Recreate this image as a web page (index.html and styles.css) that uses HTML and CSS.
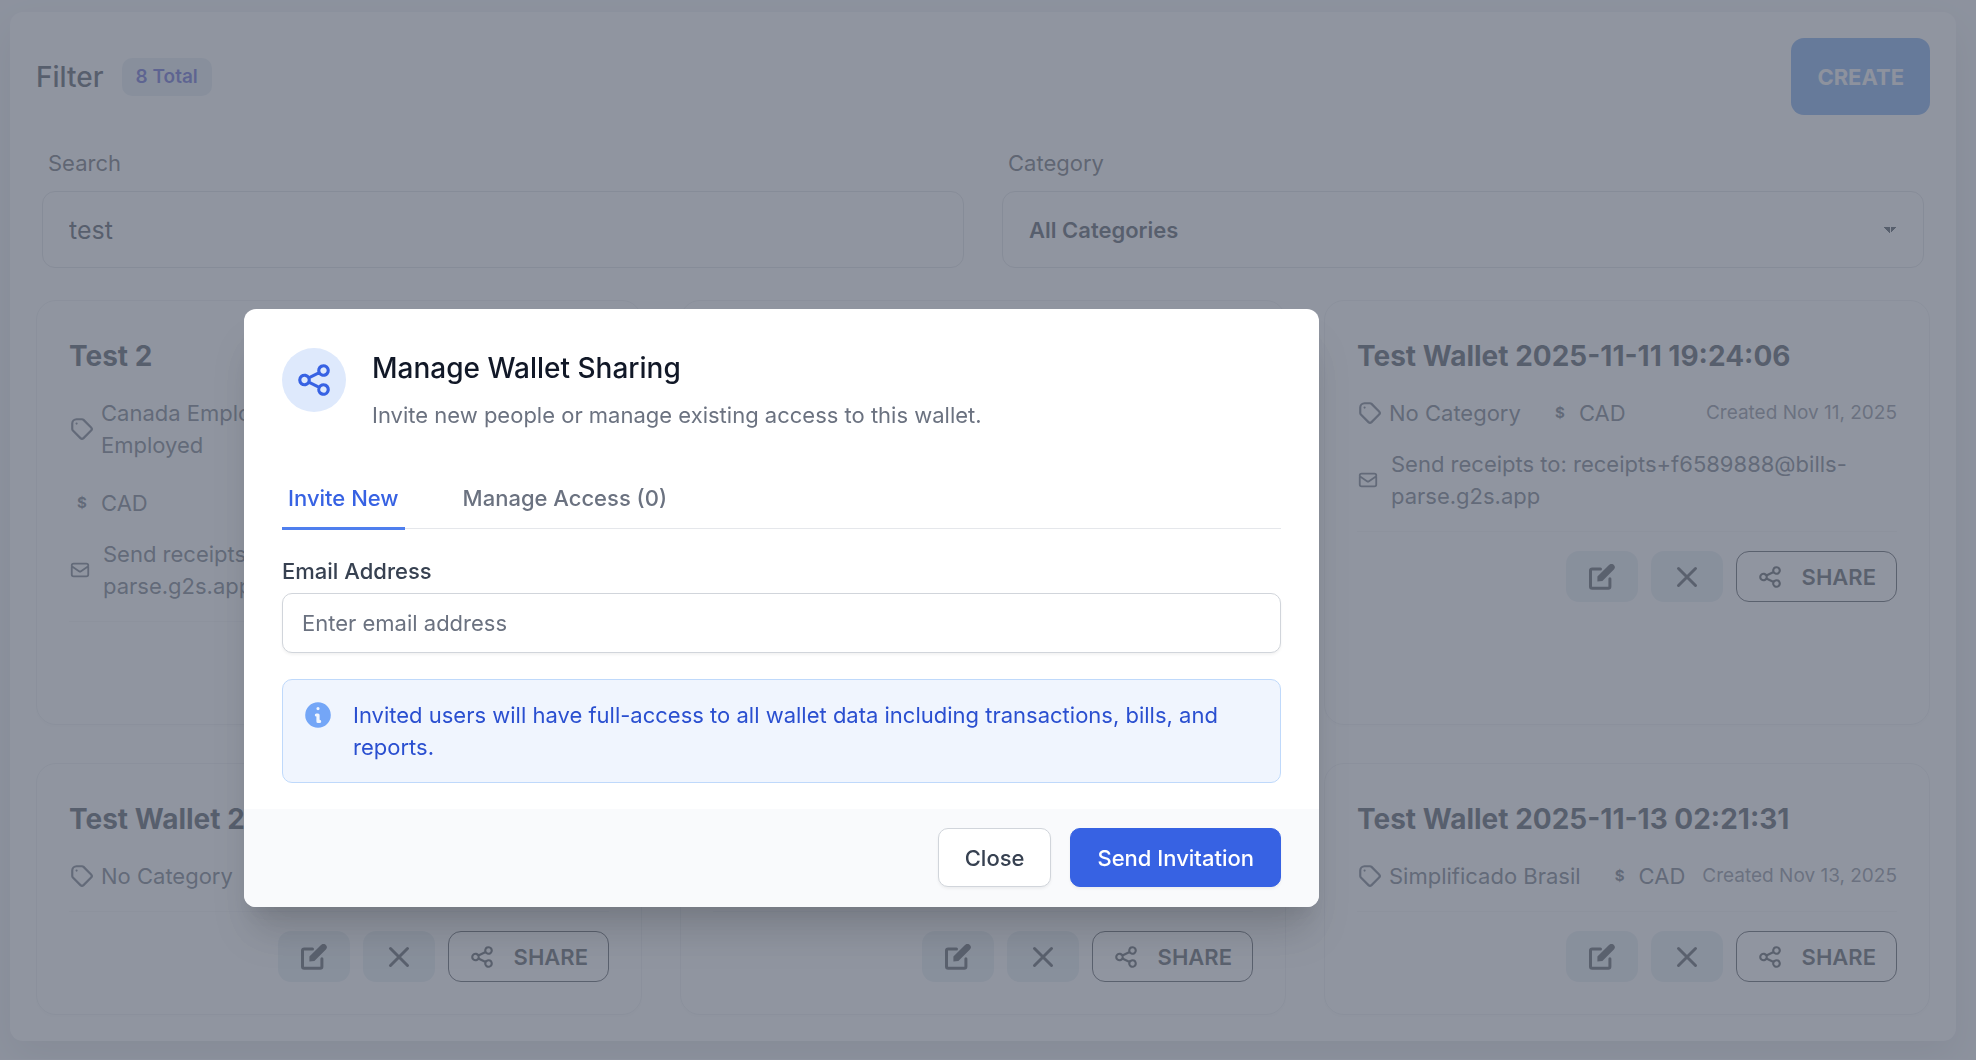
FILE: index.html
```html
<!DOCTYPE html>
<html lang="en">

<head>
    <meta charset="UTF-8">
    <meta name="viewport" content="width=device-width, initial-scale=1.0">
    <title>Wallets</title>
    <link rel="stylesheet" href="styles.css">
</head>

<body>
    <!-- shared icons -->
    <svg class="sprite" aria-hidden="true">
        <symbol id="icon-tag" viewBox="0 0 24 24">
            <path d="M7 7h.01M7 3h5c.512 0 1.024.195 1.414.586l7 7a2 2 0 010 2.828l-7 7a2 2 0 01-2.828 0l-7-7A1.994 1.994 0 013 12V7a4 4 0 014-4z" />
        </symbol>
        <symbol id="icon-mail" viewBox="0 0 24 24">
            <path d="M3 8l7.89 5.26a2 2 0 002.22 0L21 8M5 19h14a2 2 0 002-2V7a2 2 0 00-2-2H5a2 2 0 00-2 2v10a2 2 0 002 2z" />
        </symbol>
        <symbol id="icon-share" viewBox="0 0 24 24">
            <path d="M8.684 13.342C8.886 12.938 9 12.482 9 12c0-.482-.114-.938-.316-1.342m0 2.684a3 3 0 110-2.684m0 2.684l6.632 3.316m-6.632-6l6.632-3.316m0 0a3 3 0 105.367-2.684 3 3 0 00-5.367 2.684zm0 9.316a3 3 0 105.368 2.684 3 3 0 00-5.368-2.684z" />
        </symbol>
        <symbol id="icon-edit" viewBox="0 0 26 26">
            <path d="M11.5 4.9H3.2Q1.5 4.9 1.5 6.6V22.6Q1.5 24.3 3.2 24.3H19.2Q20.9 24.3 20.9 22.6V14.8" fill="none" stroke="currentColor" stroke-width="3" />
            <path d="M8.4 17.6V12.4L20 1.1a3.2 3.2 0 0 1 4.9 4.4L13.4 17z" fill="currentColor" stroke="none" />
        </symbol>
        <symbol id="icon-close" viewBox="0 0 26 26">
            <path d="M4.5 4.5l17 17M21.5 4.5l-17 17" stroke-width="3" />
        </symbol>
    </svg>

    <main class="panel">
        <header class="panel-header">
            <h1>Filter</h1>
            <span class="badge">8 Total</span>
            <button type="button" class="btn-create">CREATE</button>
        </header>

        <form class="filters">
            <div class="field">
                <label for="search">Search</label>
                <input type="text" id="search" value="test">
            </div>
            <div class="field">
                <label for="category">Category</label>
                <select id="category">
                    <option>All Categories</option>
                </select>
            </div>
        </form>

        <div class="cards">
            <article class="card">
                <h2>Test 2</h2>
                <div class="meta">
                    <div class="tags">
                        <span class="tag"><svg class="icon"><use href="#icon-tag" /></svg>Canada Employed &amp; Self Employed</span>
                        <span class="tag"><b class="currency">$</b>CAD</span>
                    </div>
                    <span class="date">Created Nov 10, 2025</span>
                </div>
                <p class="email"><svg class="icon icon-mail"><use href="#icon-mail" /></svg>Send receipts to: receipts+a1048213@bills-parse.g2s.app</p>
                <div class="actions">
                    <button type="button" class="btn-icon" aria-label="Edit"><svg class="icon-lg"><use href="#icon-edit" /></svg></button>
                    <button type="button" class="btn-icon" aria-label="Delete"><svg class="icon-lg"><use href="#icon-close" /></svg></button>
                    <button type="button" class="btn-share"><svg class="icon-lg"><use href="#icon-share" /></svg>SHARE</button>
                </div>
            </article>

            <article class="card">
                <h2>Test Wallet 2025-11-10 18:02:44</h2>
                <div class="meta">
                    <div class="tags">
                        <span class="tag"><svg class="icon"><use href="#icon-tag" /></svg>No Category</span>
                        <span class="tag"><b class="currency">$</b>CAD</span>
                    </div>
                    <span class="date">Created Nov 10, 2025</span>
                </div>
                <div class="actions">
                    <button type="button" class="btn-icon" aria-label="Edit"><svg class="icon-lg"><use href="#icon-edit" /></svg></button>
                    <button type="button" class="btn-icon" aria-label="Delete"><svg class="icon-lg"><use href="#icon-close" /></svg></button>
                    <button type="button" class="btn-share"><svg class="icon-lg"><use href="#icon-share" /></svg>SHARE</button>
                </div>
            </article>

            <article class="card">
                <h2>Test Wallet 2025-11-11 19:24:06</h2>
                <div class="meta">
                    <div class="tags">
                        <span class="tag"><svg class="icon"><use href="#icon-tag" /></svg>No Category</span>
                        <span class="tag"><b class="currency">$</b>CAD</span>
                    </div>
                    <span class="date">Created Nov 11, 2025</span>
                </div>
                <p class="email"><svg class="icon icon-mail"><use href="#icon-mail" /></svg>Send receipts to: receipts+f6589888@bills-parse.g2s.app</p>
                <div class="actions">
                    <button type="button" class="btn-icon" aria-label="Edit"><svg class="icon-lg"><use href="#icon-edit" /></svg></button>
                    <button type="button" class="btn-icon" aria-label="Delete"><svg class="icon-lg"><use href="#icon-close" /></svg></button>
                    <button type="button" class="btn-share"><svg class="icon-lg"><use href="#icon-share" /></svg>SHARE</button>
                </div>
            </article>

            <article class="card">
                <h2>Test Wallet 2025-11-12 20:15:09</h2>
                <div class="meta">
                    <div class="tags">
                        <span class="tag"><svg class="icon"><use href="#icon-tag" /></svg>No Category</span>
                        <span class="tag"><b class="currency">$</b>CAD</span>
                    </div>
                    <span class="date">Created Nov 12, 2025</span>
                </div>
                <div class="actions">
                    <button type="button" class="btn-icon" aria-label="Edit"><svg class="icon-lg"><use href="#icon-edit" /></svg></button>
                    <button type="button" class="btn-icon" aria-label="Delete"><svg class="icon-lg"><use href="#icon-close" /></svg></button>
                    <button type="button" class="btn-share"><svg class="icon-lg"><use href="#icon-share" /></svg>SHARE</button>
                </div>
            </article>

            <article class="card">
                <h2>Test Wallet 2025-11-12 21:40:52</h2>
                <div class="meta">
                    <div class="tags">
                        <span class="tag"><svg class="icon"><use href="#icon-tag" /></svg>No Category</span>
                        <span class="tag"><b class="currency">$</b>CAD</span>
                    </div>
                    <span class="date">Created Nov 12, 2025</span>
                </div>
                <div class="actions">
                    <button type="button" class="btn-icon" aria-label="Edit"><svg class="icon-lg"><use href="#icon-edit" /></svg></button>
                    <button type="button" class="btn-icon" aria-label="Delete"><svg class="icon-lg"><use href="#icon-close" /></svg></button>
                    <button type="button" class="btn-share"><svg class="icon-lg"><use href="#icon-share" /></svg>SHARE</button>
                </div>
            </article>

            <article class="card">
                <h2>Test Wallet 2025-11-13 02:21:31</h2>
                <div class="meta">
                    <div class="tags">
                        <span class="tag"><svg class="icon"><use href="#icon-tag" /></svg>Simplificado Brasil</span>
                        <span class="tag"><b class="currency">$</b>CAD</span>
                    </div>
                    <span class="date">Created Nov 13, 2025</span>
                </div>
                <div class="actions">
                    <button type="button" class="btn-icon" aria-label="Edit"><svg class="icon-lg"><use href="#icon-edit" /></svg></button>
                    <button type="button" class="btn-icon" aria-label="Delete"><svg class="icon-lg"><use href="#icon-close" /></svg></button>
                    <button type="button" class="btn-share"><svg class="icon-lg"><use href="#icon-share" /></svg>SHARE</button>
                </div>
            </article>
        </div>
    </main>

    <div class="overlay">
        <div class="modal" role="dialog" aria-labelledby="modal-title">
            <div class="modal-body">
                <div class="modal-header">
                    <div class="modal-icon"><svg><use href="#icon-share" /></svg></div>
                    <div>
                        <h3 id="modal-title">Manage Wallet Sharing</h3>
                        <p>Invite new people or manage existing access to this wallet.</p>
                    </div>
                </div>

                <div class="tabs">
                    <button type="button" class="tab active">Invite New</button>
                    <button type="button" class="tab">Manage Access (0)</button>
                </div>

                <label for="email">Email Address</label>
                <input type="email" id="email" placeholder="Enter email address">

                <div class="info">
                    <svg viewBox="0 0 20 20">
                        <path fill-rule="evenodd" d="M18 10a8 8 0 11-16 0 8 8 0 0116 0zm-7-4a1 1 0 11-2 0 1 1 0 012 0zM9 9a1 1 0 000 2v3a1 1 0 001 1h1a1 1 0 100-2v-3a1 1 0 00-1-1H9z" />
                    </svg>
                    <p>Invited users will have full-access to all wallet data including transactions, bills, and reports.</p>
                </div>
            </div>

            <div class="modal-footer">
                <button type="button" class="btn btn-close">Close</button>
                <button type="button" class="btn btn-send">Send Invitation</button>
            </div>
        </div>
    </div>
</body>

</html>
```
FILE: styles.css
```css
* {
    box-sizing: border-box;
}

body {
    margin: 0;
    padding: 12px 20px 18px 10px;
    background-color: #f2f4f7;
    font-family: Inter, "Liberation Sans", sans-serif;
    font-size: 22px;
    line-height: 32px;
    color: #1f2937;
}

h1,
h2,
h3,
p {
    margin: 0;
}

button,
input,
select {
    font: inherit;
    color: inherit;
}

button {
    cursor: pointer;
}

svg {
    flex-shrink: 0;
    fill: none;
    stroke: currentColor;
    stroke-width: 2;
    stroke-linecap: round;
    stroke-linejoin: round;
}

.sprite {
    display: none;
}

.panel {
    padding: 26px;
    background-color: white;
    border-radius: 13px;
    box-shadow: 0 16px 40px rgba(0, 0, 0, 0.12);
}

.panel-header {
    display: flex;
    align-items: center;
    gap: 18px;
    margin-bottom: 32px;
}

.panel-header h1 {
    font-size: 28px;
    font-weight: 500;
}

.badge {
    padding: 3px 14px;
    background-color: #dfe8f0;
    border-radius: 10px;
    font-size: 19px;
    font-weight: 600;
    color: #3a3fc4;
}

.btn-create {
    height: 77px;
    margin-left: auto;
    padding: 0 26px;
    background-color: #5892e6;
    border: none;
    border-radius: 13px;
    font-weight: 700;
    color: #f3f4f6;
}

.filters {
    display: flex;
    gap: 38px;
    margin-bottom: 32px;
    padding: 0 6px;
}

.field {
    flex: 1;
}

.field label {
    display: block;
    margin-bottom: 12px;
    padding-left: 6px;
    color: #41454e;
}

.field input,
.field select {
    width: 100%;
    height: 77px;
    padding: 0 26px;
    background-color: transparent;
    border: 1px solid #d8dadd;
    border-radius: 13px;
}

.field input {
    font-size: 25px;
}

.field select {
    appearance: none;
    font-weight: 600;
    background-image: linear-gradient(45deg, transparent 50%, currentColor 50%), linear-gradient(135deg, currentColor 50%, transparent 50%);
    background-position: right 33px center, right 26px center;
    background-size: 6px 6px;
    background-repeat: no-repeat;
}

.cards {
    display: grid;
    grid-template-columns: repeat(3, 1fr);
    gap: 38px;
}

.card {
    padding: 32px;
    border: 1px solid #e9ebee;
    border-radius: 20px;
    box-shadow: 0 2px 3px rgba(0, 0, 0, 0.03);
}

.card h2 {
    margin-bottom: 18px;
    font-size: 28px;
    font-weight: 700;
    line-height: 46px;
    white-space: nowrap;
}

.meta {
    display: flex;
    justify-content: space-between;
    align-items: center;
    gap: 12px;
    margin-bottom: 19px;
    color: #4b5563;
}

.tags {
    display: flex;
    flex-wrap: wrap;
    gap: 26px;
}

.tag {
    display: flex;
    align-items: center;
    gap: 6px;
}

.icon {
    width: 26px;
    height: 26px;
}

.icon-mail {
    width: 22px;
    height: 22px;
}

.icon-lg {
    width: 26px;
    height: 26px;
}

.currency {
    width: 26px;
    font-size: 15px;
    text-align: center;
}

.date {
    font-size: 19px;
    white-space: nowrap;
    color: #6b7280;
}

.email {
    display: flex;
    align-items: center;
    gap: 12px;
    margin-bottom: 19px;
    color: #4b5563;
}

.actions {
    display: flex;
    justify-content: flex-end;
    gap: 13px;
    padding-top: 19px;
    border-top: 1px solid #f1f2f4;
}

.btn-icon,
.btn-share {
    display: flex;
    align-items: center;
    justify-content: center;
    height: 51px;
    border-radius: 13px;
    color: #2b3038;
}

.btn-icon {
    width: 72px;
    padding: 0;
    background-color: #e0e9ef;
    border: none;
}

.btn-share {
    gap: 19px;
    padding: 0 20px;
    background-color: transparent;
    border: 1px solid #2b3038;
    font-weight: 600;
}

/* modal */
.overlay {
    position: fixed;
    inset: 0;
    padding: 309px 244px 20px;
    background-color: rgba(107, 114, 128, 0.75);
}

.modal {
    max-width: 1075px;
    overflow: hidden;
    background-color: white;
    border-radius: 12px;
    box-shadow: 0 32px 40px -8px rgba(0, 0, 0, 0.15), 0 16px 16px -8px rgba(0, 0, 0, 0.06);
}

.modal-body {
    padding: 39px 38px 26px;
}

.modal-header {
    display: flex;
    gap: 26px;
    margin-bottom: 38px;
}

.modal-icon {
    display: flex;
    align-items: center;
    justify-content: center;
    width: 64px;
    height: 64px;
    background-color: #dee9fc;
    border-radius: 50%;
    color: #3762e3;
}

.modal-icon svg {
    width: 38px;
    height: 38px;
}

.modal-header h3 {
    margin-bottom: 11px;
    font-size: 28px;
    font-weight: 500;
    line-height: 40px;
    color: #111827;
}

.modal-header p {
    color: #6b7280;
}

.tabs {
    display: flex;
    gap: 52px;
    margin-bottom: 26px;
    border-bottom: 1px solid #e5e7eb;
}

.tab {
    margin-bottom: -2px;
    padding: 13px 6px;
    background: none;
    border: none;
    border-bottom: 3px solid transparent;
    font-weight: 500;
    color: #6b7280;
}

.tab.active {
    border-color: #4f7fee;
    color: #3762e3;
}

.modal-body label {
    display: block;
    margin-bottom: 6px;
    font-weight: 500;
    color: #374151;
}

.modal-body input {
    width: 100%;
    height: 60px;
    padding: 0 19px;
    border: 1px solid #d1d5db;
    border-radius: 10px;
    box-shadow: 0 2px 3px rgba(0, 0, 0, 0.05);
}

.modal-body input::placeholder {
    color: #6b7280;
}

.info {
    display: flex;
    gap: 19px;
    margin-top: 26px;
    padding: 19px;
    background-color: #f0f5fe;
    border: 1px solid #bfd9fb;
    border-radius: 10px;
    color: #2a4fd0;
}

.info svg {
    width: 32px;
    height: 32px;
    fill: #74a6f7;
    stroke: none;
}

.modal-footer {
    display: flex;
    justify-content: flex-end;
    gap: 19px;
    padding: 19px 38px 20px;
    background-color: #f9fafc;
}

.btn {
    height: 59px;
    padding: 0 26px;
    border: 1px solid #d1d5db;
    border-radius: 10px;
    box-shadow: 0 2px 3px rgba(0, 0, 0, 0.05);
    font-weight: 500;
}

.btn-close {
    background-color: white;
    color: #374151;
}

.btn-send {
    background-color: #3762e3;
    border-color: #3762e3;
    color: white;
}
```
